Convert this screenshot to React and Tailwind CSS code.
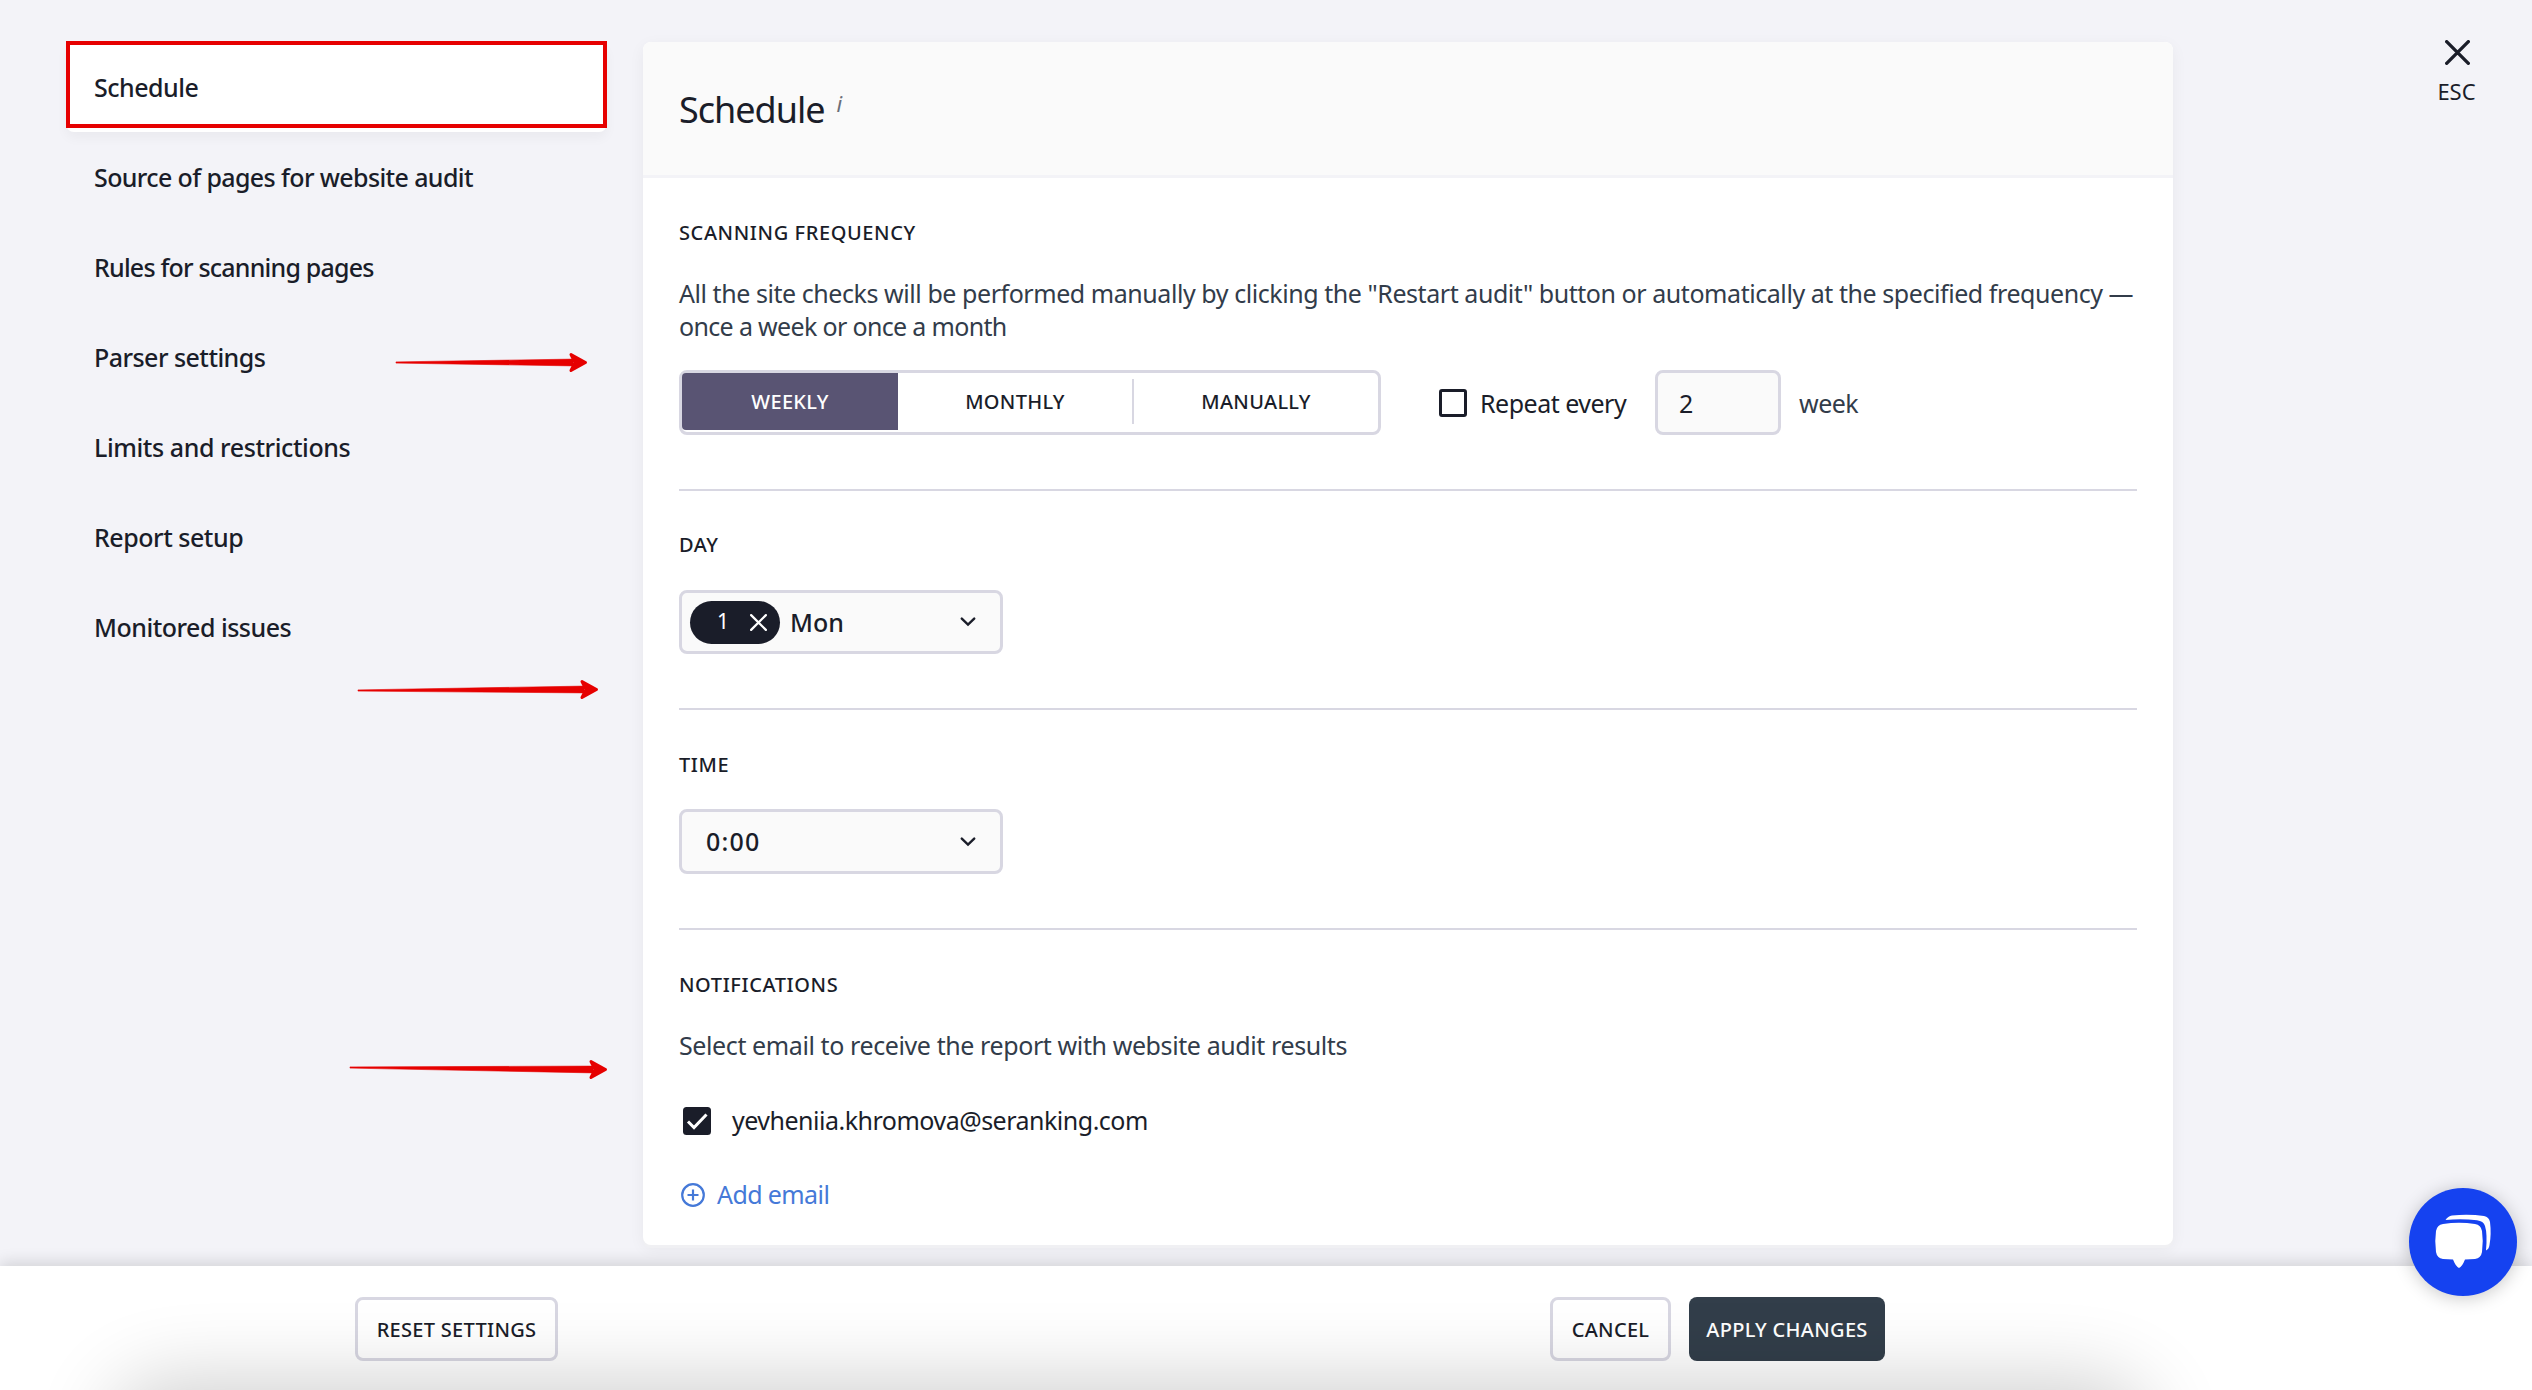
const menu = [
  { label: 'Schedule', tracking: 'tracking-[-0.5px]' },
  { label: 'Source of pages for website audit', tracking: 'tracking-[-0.62px]' },
  { label: 'Rules for scanning pages', tracking: 'tracking-[-0.8px]' },
  { label: 'Parser settings', tracking: 'tracking-[-0.54px]' },
  { label: 'Limits and restrictions', tracking: 'tracking-[-0.42px]' },
  { label: 'Report setup', tracking: 'tracking-[-0.47px]' },
  { label: 'Monitored issues', tracking: 'tracking-[-0.5px]' },
];

const arrows = [
  { x1: 396, y1: 362.5, x2: 587, y2: 362.5 },
  { x1: 358, y1: 690.5, x2: 598, y2: 689.5 },
  { x1: 350, y1: 1067.5, x2: 607, y2: 1069.5 },
];

function Arrow({ x1, y1, x2, y2 }) {
  const neck = x2 - 14;
  return (
    <g fill="#e60000" stroke="#e60000">
      <path
        strokeWidth="0.6"
        d={`M${x1} ${y1 - 0.6} L${neck} ${y2 - 3.4} V${y2 + 3.4} L${x1} ${y1 + 0.6} Z`}
      />
      <path
        strokeWidth="3"
        strokeLinejoin="round"
        d={`M${x2 - 16} ${y2 - 8} L${x2 - 1.5} ${y2} L${x2 - 16} ${y2 + 8} L${x2 - 12} ${y2} Z`}
      />
    </g>
  );
}

function Cross({ className }) {
  return (
    <svg viewBox="0 0 24 24" className={className} fill="none" stroke="currentColor" strokeWidth="3.2">
      <path d="M1.6 1.6 22.4 22.4M22.4 1.6 1.6 22.4" strokeLinecap="round" />
    </svg>
  );
}

function Chevron() {
  return (
    <svg viewBox="0 0 16 10" className="w-4 h-2.5" fill="none" stroke="#1a1d29" strokeWidth="2.4">
      <path d="M1.8 1.6 8 7.6 14.2 1.6" strokeLinecap="round" />
    </svg>
  );
}

function SectionTitle({ children }) {
  return <h2 className="text-[20px] leading-[32px] font-medium tracking-[0.6px]">{children}</h2>;
}

function Sidebar() {
  return (
    <nav className="w-[541px] ml-[66px] pt-[42px] shrink-0">
      {menu.map(({ label, tracking }, i) => (
        <a
          key={label}
          className={
            i === 0
              ? 'flex h-[90px] items-center rounded-lg bg-white pl-7 pt-px text-[25px] font-medium shadow-[0_6px_12px_rgba(0,0,0,0.04)]'
              : 'flex h-[90px] items-center pl-7 pt-px text-[25px] font-medium'
          }
        >
          <span className={tracking}>{label}</span>
        </a>
      ))}
    </nav>
  );
}

function Panel() {
  return (
    <main className="ml-9 mt-[42px] flex h-[1203px] w-[1530px] shrink-0 flex-col overflow-hidden rounded-lg bg-white shadow-[0_3px_0_#f0f0f3,0_4px_16px_rgba(0,0,0,0.05)]">
      <header className="flex h-[136px] shrink-0 items-center border-b-[3px] border-[#f3f3f7] bg-[#fafafa] pl-9">
        <h1 className="pt-0.5 text-[36px] leading-[48px] tracking-[-1px]">Schedule</h1>
        <span className="ml-3 mb-3 text-[22px] leading-6 italic text-[#6b6e78]">i</span>
      </header>

      <div className="px-9 pt-[39px]">
        <section className="border-b-2 border-[#d8d7e2] pb-[54px]">
          <SectionTitle>SCANNING FREQUENCY</SectionTitle>
          <p className="mt-[28px] text-[25px] leading-[33px] whitespace-nowrap text-[#323c4a]">
            <span className="tracking-[-0.44px]">
              All the site checks will be performed manually by clicking the "Restart audit" button or automatically at the specified frequency —
            </span>
            <br />
            <span className="tracking-[-0.66px]">once a week or once a month</span>
          </p>
          <div className="mt-[27px] flex items-center">
            <div className="flex h-[65px] w-[702px] rounded-lg border-[3px] border-[#d8d7e2] text-[20px] font-medium tracking-[0.3px]">
              <button className="h-[57px] w-[216px] rounded-l-[4px] bg-[#595473] text-white">WEEKLY</button>
              <button className="h-[57px] w-[234px]">MONTHLY</button>
              <span className="mt-1.5 h-[45px] w-0.5 bg-[#d8d7e2]" />
              <button className="h-[57px] flex-1">MANUALLY</button>
            </div>
            <span className="ml-[58px] size-7 rounded-[3px] border-[3px] border-[#1a1d29]" />
            <span className="ml-[13px] w-[146px] pt-0.5 text-[25px] leading-[33px] tracking-[-0.5px] whitespace-nowrap">Repeat every</span>
            <span className="ml-[29px] flex h-[65px] w-[126px] items-center rounded-lg border-[3px] border-[#d8d7e2] bg-[#fafafa] pl-[21px] pt-0.5 text-[25px]">2</span>
            <span className="ml-[18px] pt-0.5 text-[25px] leading-[33px] tracking-[-0.5px] text-[#323c4a]">week</span>
          </div>
        </section>

        <section className="border-b-2 border-[#d8d7e2] pt-[38px] pb-[54px]">
          <SectionTitle>DAY</SectionTitle>
          <div className="mt-[29px] flex h-[64px] w-[324px] items-center rounded-lg border-[3px] border-[#d8d7e2] bg-[#fafafa] pl-2 pr-6 text-[25px] font-medium">
            <span className="flex h-[43px] w-[90px] items-center rounded-full bg-[#1a1d29] pl-[27px] text-[21px] font-normal text-white">
              1
              <Cross className="ml-[21px] size-[17px]" />
            </span>
            <span className="ml-2.5 pt-0.5">Mon</span>
            <span className="ml-auto"><Chevron /></span>
          </div>
        </section>

        <section className="border-b-2 border-[#d8d7e2] pt-[39px] pb-[54px]">
          <SectionTitle>TIME</SectionTitle>
          <div className="mt-[28px] flex h-[65px] w-[324px] items-center rounded-lg border-[3px] border-[#d8d7e2] bg-[#fafafa] pl-6 pr-6 text-[25px] font-medium">
            <span className="pt-px tracking-[1.2px]">0:00</span>
            <span className="ml-auto"><Chevron /></span>
          </div>
        </section>

        <section className="pt-[39px]">
          <SectionTitle>NOTIFICATIONS</SectionTitle>
          <p className="mt-[28px] text-[25px] leading-[33px] tracking-[-0.4px] text-[#323c4a]">
            Select email to receive the report with website audit results
          </p>
          <label className="mt-[42px] flex h-[33px] items-center pl-1 text-[25px] leading-[33px]">
            <svg viewBox="0 0 28 28" className="size-7">
              <rect width="28" height="28" rx="3.5" fill="#1a1d29" />
              <path d="M5 14.5 11 20.5 23.5 7.5" fill="none" stroke="#fff" strokeWidth="3" />
            </svg>
            <span className="ml-[21px] tracking-[-0.5px]">yevheniia.khromova@seranking.com</span>
          </label>
          <a className="mt-[41px] flex h-[33px] items-center pl-0.5 text-[25px] leading-[33px] text-[#4579d8]">
            <svg viewBox="0 0 24 24" className="size-6" fill="none" stroke="currentColor" strokeWidth="2.2">
              <circle cx="12" cy="12" r="10.8" />
              <path d="M12 6.5V17.5M6.5 12H17.5" />
            </svg>
            <span className="ml-3 tracking-[-0.6px]">Add email</span>
          </a>
        </section>
      </div>
    </main>
  );
}

function Footer() {
  return (
    <footer className="relative flex h-[124px] items-start overflow-hidden bg-white pt-[31px] text-[20px] font-medium tracking-[0.3px]">
      <button className="ml-[355px] h-[64px] w-[203px] rounded-lg border-[3px] border-[#d8d7e2] pt-px">RESET SETTINGS</button>
      <button className="ml-[992px] h-[64px] w-[121px] rounded-lg border-[3px] border-[#d8d7e2] pt-px">CANCEL</button>
      <button className="ml-[18px] h-[64px] w-[196px] rounded-lg bg-[#323e4a] pt-px text-white">APPLY CHANGES</button>
      {/* soft shadow rising from the bottom edge */}
      <div className="pointer-events-none absolute top-[134px] left-[130px] h-20 w-[2000px] rounded-full shadow-[0_0_80px_20px_rgba(0,0,0,0.19)]" />
    </footer>
  );
}

export default function App() {
  return (
    <div className="relative flex h-[1390px] w-[2532px] flex-col overflow-hidden bg-[#f3f3f8] font-['Noto_Sans',sans-serif] text-[#1a1d29]">
      <div className="flex h-[1266px] shrink-0">
        <Sidebar />
        <Panel />
        <div className="ml-[264px] flex w-[39px] flex-col items-center pt-10">
          <Cross className="ml-0.5 size-[25px]" />
          <span className="mt-3 text-[22px] leading-7">ESC</span>
        </div>
      </div>
      <div className="relative shadow-[0_-4px_14px_rgba(0,0,0,0.13)]">
        <Footer />
      </div>

      <div className="absolute top-[41px] left-[66px] h-[87px] w-[541px] border-4 border-[#e60000]" />
      <svg className="pointer-events-none absolute top-0 left-0" width="643" height="1266">
        {arrows.map((a) => (
          <Arrow key={a.y1} {...a} />
        ))}
      </svg>

      <button className="absolute top-[1188px] left-[2409px] flex size-[108px] items-center justify-center rounded-full bg-[#1542f0] shadow-[0_2px_18px_rgba(0,0,0,0.22)]">
        <svg viewBox="0 0 108 108" className="size-[108px]" fill="#fff">
          <path d="M34 36 Q50 33.500 66 36 Q72 37 73 43 Q74.500 53 73 64 Q72 70 66 71 L56 71.500 Q53 79 50 80 Q47 79 44 71.500 L34 71 Q28 70 27 64 Q25.500 53 27 43 Q28 37 34 36 Z" />
          <path d="M36.500 32 Q39 28 43 27.500 Q60 26 75 28 Q80 29 81 34 Q82.500 46 80.500 57 Q80 61 77 62.500 Q78.500 46 76 38 Q74.500 33 68 32.200 Q52 30.500 36.500 32 Z" />
        </svg>
      </button>
    </div>
  );
}
